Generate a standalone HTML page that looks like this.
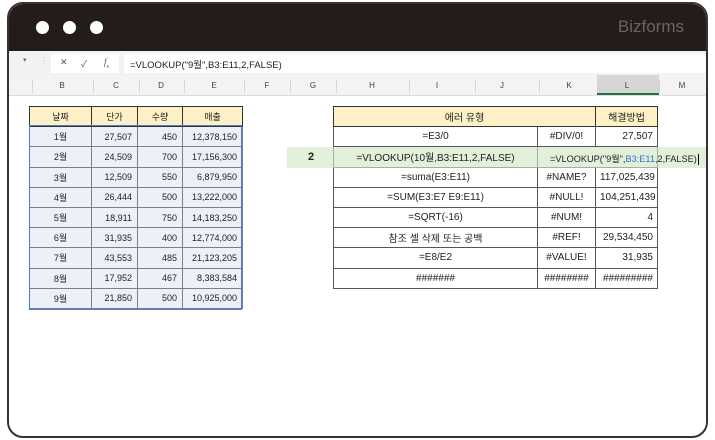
<!DOCTYPE html>
<html><head><meta charset="utf-8"><style>
*{margin:0;padding:0;box-sizing:border-box}
body{width:715px;height:440px;background:#fff;position:relative;overflow:hidden;font-family:"Liberation Sans","Noto Sans CJK KR",sans-serif;font-size:9px;color:#222}
.frame{position:absolute;left:7px;top:2px;width:701px;height:436px;border:2px solid #3a3230;border-radius:16px;overflow:hidden;background:#fff}
.top{position:absolute;left:0;top:0;width:100%;height:47px;background:#231c1a}
.dot{position:absolute;top:17px;width:13px;height:13px;border-radius:50%;background:#fff}
.brand{position:absolute;right:22px;top:13px;color:#6a6361;font-size:17px}
.fbar{position:absolute;left:0;top:47px;width:100%;height:24px;background:#f2f2f2}
.box{position:absolute;top:3px;height:19px;background:#fff}
.colh{position:absolute;left:0;top:71px;width:100%;height:21px;background:#f3f3f3;border-bottom:1px solid #ddd}
.colh span{position:absolute;top:6px;font-size:8px;color:#444;transform:translateX(-50%)}
.sep{position:absolute;top:5px;width:1px;height:13px;background:#d6d6d6}
table{position:absolute;border-collapse:collapse;table-layout:fixed}
td{border:1px solid #555;height:20.2px;padding:0 5px;white-space:nowrap}
.t1 td{border-color:#7a7f88;border-width:1.5px}
.t1 tr:first-child td,.t2 tr:first-child td{background:#fdefc6;border-color:#333;text-align:center}
.t1 td{background:#edf0f8;text-align:right}
.t1 td:first-child{text-align:center}
.t2{font-size:10px}
.t2 td{text-align:center;padding:0 4px}
.t2 td.r{text-align:right}
</style></head><body>
<div class="frame">
<div class="top"><div class="dot" style="left:27px"></div><div class="dot" style="left:54px"></div><div class="dot" style="left:81px"></div><div class="brand">Bizforms</div></div>
<div class="fbar">
<span style="position:absolute;left:14px;top:5px;font-size:7px;color:#666">▾</span>
<span style="position:absolute;left:31px;top:5px;font-size:8px;color:#bbb">⋮</span>
<div class="box" style="left:42px;width:68px"><span style="position:absolute;left:9px;top:3px;color:#555">✕</span><span style="position:absolute;left:30px;top:3px;color:#555">✓</span><span style="position:absolute;left:53px;top:3px;color:#555;font-style:italic;font-family:'Liberation Serif'">f<sub style="font-size:6px">x</sub></span></div>
<div class="box" style="left:115px;width:590px"><span style="position:absolute;left:6px;top:3px;font-size:9.5px">=VLOOKUP("9월",B3:E11,2,FALSE)</span></div>
</div>
<div class="colh">
<div style="position:absolute;left:588px;top:0;width:62px;height:20px;background:#d6d6d6;border-bottom:2px solid #217346"></div>
<span style="left:53px">B</span><span style="left:107px">C</span><span style="left:152px">D</span><span style="left:205px">E</span><span style="left:258px">F</span><span style="left:304px">G</span><span style="left:363px">H</span><span style="left:428px">I</span><span style="left:493px">J</span><span style="left:560px">K</span><span style="left:618px">L</span><span style="left:673px">M</span>
<i class="sep" style="left:23px"></i><i class="sep" style="left:84px"></i><i class="sep" style="left:130px"></i><i class="sep" style="left:175px"></i><i class="sep" style="left:235px"></i><i class="sep" style="left:281px"></i><i class="sep" style="left:327px"></i><i class="sep" style="left:400px"></i><i class="sep" style="left:466px"></i><i class="sep" style="left:530px"></i><i class="sep" style="left:588px"></i><i class="sep" style="left:650px"></i>
</div>
<div style="position:absolute;left:278px;top:143px;width:420px;height:21px;background:#e2efda"></div>
<div style="position:absolute;left:299px;top:147px;font-weight:bold;font-size:11px">2</div>
</div>
<table class="t1" style="left:29px;top:106px;width:213px">
<colgroup><col style="width:62px"><col style="width:46px"><col style="width:45px"><col style="width:60px"></colgroup>
<tr><td>날짜</td><td>단가</td><td>수량</td><td>매출</td></tr>
<tr><td>1월</td><td>27,507</td><td>450</td><td>12,378,150</td></tr>
<tr><td>2월</td><td>24,509</td><td>700</td><td>17,156,300</td></tr>
<tr><td>3월</td><td>12,509</td><td>550</td><td>6,879,950</td></tr>
<tr><td>4월</td><td>26,444</td><td>500</td><td>13,222,000</td></tr>
<tr><td>5월</td><td>18,911</td><td>750</td><td>14,183,250</td></tr>
<tr><td>6월</td><td>31,935</td><td>400</td><td>12,774,000</td></tr>
<tr><td>7월</td><td>43,553</td><td>485</td><td>21,123,205</td></tr>
<tr><td>8월</td><td>17,952</td><td>467</td><td>8,383,584</td></tr>
<tr><td>9월</td><td>21,850</td><td>500</td><td>10,925,000</td></tr>
</table>
<div style="position:absolute;left:29px;top:125px;width:213px;height:185px;border:1.5px solid #4a7fd0"></div>
<table class="t2" style="left:333px;top:106px;width:324px">
<colgroup><col style="width:204px"><col style="width:58px"><col style="width:62px"></colgroup>
<tr><td colspan="2">에러 유형</td><td>해결방법</td></tr>
<tr><td>=E3/0</td><td>#DIV/0!</td><td class="r">27,507</td></tr>
<tr><td style="background:#e2efda;border-color:#aaa">=VLOOKUP(10월,B3:E11,2,FALSE)</td><td style="background:#e2efda;border-color:#aaa;border-right:none"></td><td style="background:#e2efda;border-color:#aaa;border-left:none"></td></tr>
<tr><td>=suma(E3:E11)</td><td>#NAME?</td><td class="r">117,025,439</td></tr>
<tr><td>=SUM(E3:E7 E9:E11)</td><td>#NULL!</td><td class="r">104,251,439</td></tr>
<tr><td>=SQRT(-16)</td><td>#NUM!</td><td class="r">4</td></tr>
<tr><td>참조 셀 삭제 또는 공백</td><td>#REF!</td><td class="r">29,534,450</td></tr>
<tr><td>=E8/E2</td><td>#VALUE!</td><td class="r">31,935</td></tr>
<tr><td>#######</td><td>########</td><td class="r">#########</td></tr>
</table>
<div style="position:absolute;left:550px;top:151px;font-size:9.2px;white-space:nowrap">=VLOOKUP("9월",<span style="color:#3a6fc4">B3:E11</span>,2,FALSE)<span style="display:inline-block;width:1px;height:11px;background:#000;vertical-align:middle;margin-left:1px"></span></div>
</body></html>
